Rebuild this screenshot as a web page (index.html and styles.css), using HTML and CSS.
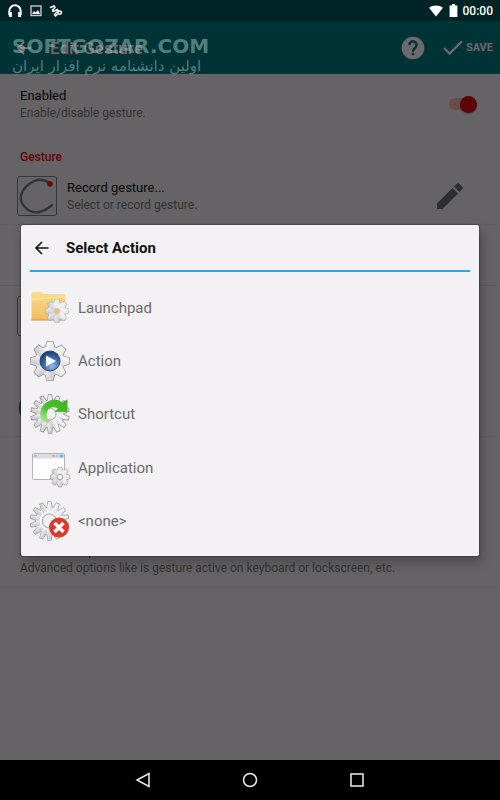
FILE: index.html
```html
<!DOCTYPE html>
<html lang="en">

<head>
    <meta charset="UTF-8">
    <meta name="viewport" content="width=device-width, initial-scale=1.0">
    <title>Edit Gesture</title>
    <link rel="stylesheet" href="styles.css">
</head>

<body>
    <!-- shared gear shapes -->
    <svg class="defs" width="0" height="0" aria-hidden="true">
        <defs>
            <linearGradient id="metal" x1="0" y1="0" x2="1" y2="1">
                <stop offset="0" stop-color="#fdfdfd" />
                <stop offset="0.5" stop-color="#e6e6e8" />
                <stop offset="1" stop-color="#c4c4c8" />
            </linearGradient>
            <linearGradient id="folder" x1="0" y1="0" x2="0" y2="1">
                <stop offset="0" stop-color="#fbdc8c" />
                <stop offset="1" stop-color="#efbd5e" />
            </linearGradient>
            <radialGradient id="blue" cx="0.6" cy="0.75" r="0.7">
                <stop offset="0" stop-color="#8fc0ea" />
                <stop offset="0.6" stop-color="#3c6ba8" />
                <stop offset="1" stop-color="#1f3f75" />
            </radialGradient>
            <linearGradient id="green" x1="0" y1="1" x2="1" y2="0">
                <stop offset="0" stop-color="#c9f2b8" />
                <stop offset="0.4" stop-color="#4cc42f" />
                <stop offset="1" stop-color="#3fae22" />
            </linearGradient>
            <g id="bar8">
                <path d="M-4.4-14 L-3-19 H3 L4.4-14 V14 L3 19 H-3 L-4.4 14Z" />
            </g>
            <g id="gear8">
                <circle r="14.5" />
                <use href="#bar8" />
                <use href="#bar8" transform="rotate(45)" />
                <use href="#bar8" transform="rotate(90)" />
                <use href="#bar8" transform="rotate(135)" />
            </g>
            <g id="bar14">
                <path d="M-2.2-14 L-1.4-19 H1.4 L2.2-14 V14 L1.4 19 H-1.4 L-2.2 14Z" />
            </g>
            <g id="gear14">
                <circle r="13.5" />
                <use href="#bar14" />
                <use href="#bar14" transform="rotate(25.7)" />
                <use href="#bar14" transform="rotate(51.4)" />
                <use href="#bar14" transform="rotate(77.1)" />
                <use href="#bar14" transform="rotate(102.9)" />
                <use href="#bar14" transform="rotate(128.6)" />
                <use href="#bar14" transform="rotate(154.3)" />
            </g>
        </defs>
    </svg>

    <div class="screen">
        <div class="status-bar">
            <svg width="16" height="16" viewBox="0 0 16 16" fill="none" stroke="#fff" stroke-width="2">
                <path d="M2.3 12V8a5.7 5.7 0 0 1 11.4 0V12" />
                <path d="M3.4 9v5M12.6 9v5" stroke-width="3" />
            </svg>
            <svg width="12" height="12" viewBox="0 0 12 12">
                <rect x="1" y="1" width="10" height="9.5" fill="none" stroke="#cfc4c8" stroke-width="1.4" />
                <path d="M2 9l2-3 1.6 1.6L8 5l2 4z" fill="#fff" />
            </svg>
            <svg width="14" height="14" viewBox="0 0 14 14" fill="none" stroke="#fff" stroke-width="1.5" stroke-linecap="round" stroke-linejoin="round">
                <path d="M1.500 3.500L5 1.800 6 3.500 3.500 6 4 7.500 8.500 5.500 9.200 6.800 5.500 10.500 6.500 12 9.500 9.500" />
                <circle cx="10.800" cy="8.600" r="1.700" />
            </svg>
            <span class="spacer"></span>
            <svg width="16" height="12" viewBox="0 0 16 12">
                <path d="M1 2.8C5-.2 11-.2 15 2.8L8 11.6z" fill="#fff" />
            </svg>
            <svg class="battery" width="9" height="13" viewBox="0 0 9 13">
                <path d="M3 0h3v1.4h2.4V13H.6V1.4H3z" fill="#fff" />
            </svg>
            <span class="clock">00:00</span>
        </div>

        <header class="app-bar">
            <button type="button" class="back" aria-label="Back">
                <svg width="16" height="16" viewBox="0 0 16 16" fill="none" stroke="#7a6a6c" stroke-width="2">
                    <path d="M15 8H2M8 2L2 8l6 6" />
                </svg>
            </button>
            <h1>Edit Gesture</h1>
            <button type="button" class="help" aria-label="Help">
                <svg width="24" height="24" viewBox="0 0 24 24">
                    <circle cx="12" cy="12" r="11.3" fill="#6d686b" />
                    <path d="M8.4 9.2a3.6 3.6 0 1 1 6 2.4c-1.4 1.200-2.400 1.800-2.400 3.800" fill="none" stroke="#003335" stroke-width="2.4" />
                    <rect x="10.8" y="16.8" width="2.4" height="2.4" fill="#003335" />
                </svg>
            </button>
            <button type="button" class="save">
                <svg width="20" height="16" viewBox="0 0 20 16" fill="none" stroke="#6d686b" stroke-width="2.2">
                    <path d="M1 8l5.6 5.6L19 1.2" />
                </svg>
                SAVE
            </button>
            <div class="watermark">
                <span class="wm-site">SOFTGOZAR.COM</span>
                <span class="wm-text" lang="fa" dir="rtl">اولین دانشنامه نرم افزار ایران</span>
            </div>
        </header>

        <main class="settings">
            <div class="row plain">
                <label class="row-text" for="enabled">
                    <span class="title">Enabled</span>
                    <span class="sub">Enable/disable gesture.</span>
                </label>
                <input type="checkbox" id="enabled" class="switch" checked>
            </div>

            <h2>Gesture</h2>
            <div class="row first">
                <svg class="thumb" width="40" height="40" viewBox="0 0 40 40" fill="none">
                    <rect x="0.5" y="0.5" width="39" height="39" rx="2" stroke="#2f3939" />
                    <path d="M33 7.500C26 2 18 3 11 9 4 15 1 23 7 30c8 10 19 7 28-1" stroke="#343636" stroke-width="2.4" stroke-linecap="round" />
                    <circle cx="33" cy="8" r="2.8" fill="#6b0808" />
                </svg>
                <div class="row-text">
                    <span class="title">Record gesture...</span>
                    <span class="sub">Select or record gesture.</span>
                </div>
                <button type="button" class="edit" aria-label="Edit gesture">
                    <svg width="28" height="28" viewBox="0 0 28 28" fill="#2d2f2f">
                        <path d="M1 21.500L16.500 6l5.500 5.500L6.500 27H1z" />
                        <path d="M18 4.500l3-3q1-1 2 0l3.500 3.500q1 1 0 2l-3 3z" />
                    </svg>
                </button>
            </div>
            <div class="row"></div>
            <div class="row plain">
                <svg class="thumb" width="40" height="40" viewBox="0 0 40 40" fill="none">
                    <rect x="0.5" y="0.5" width="39" height="39" rx="2" stroke="#2f3939" />
                </svg>
            </div>

            <h2></h2>
            <div class="row first">
                <svg class="thumb" width="40" height="40" viewBox="0 0 40 40">
                    <circle cx="20" cy="20" r="18" fill="#0d2f31" />
                </svg>
            </div>
            <div class="row plain"></div>

            <h2></h2>
            <div class="row first">
                <div class="row-text">
                    <span class="title">Advanced options</span>
                    <span class="sub">Advanced options like is gesture active on keyboard or lockscreen, etc.</span>
                </div>
            </div>
        </main>

        <nav class="nav-bar">
            <button type="button" aria-label="Back">
                <svg width="16" height="16" viewBox="0 0 16 16"><path d="M14 1.500v13L2 8z" /></svg>
            </button>
            <button type="button" aria-label="Home">
                <svg width="16" height="16" viewBox="0 0 16 16"><circle cx="8" cy="8" r="6.500" /></svg>
            </button>
            <button type="button" aria-label="Recent apps">
                <svg width="16" height="16" viewBox="0 0 16 16"><rect x="2" y="2" width="12" height="12" /></svg>
            </button>
        </nav>

        <div class="overlay">
            <section class="dialog" role="dialog" aria-labelledby="dialogTitle">
                <div class="dialog-head">
                    <button type="button" aria-label="Close">
                        <svg width="16" height="16" viewBox="0 0 16 16" fill="none" stroke="#111" stroke-width="1.600">
                            <path d="M14.500 8H2M8 2L2 8l6 6" />
                        </svg>
                    </button>
                    <h2 id="dialogTitle">Select Action</h2>
                </div>
                <div class="actions">
                    <button type="button">
                        <svg width="40" height="40" viewBox="0 0 40 40">
                            <path d="M1.500 6q0-2 2-2h7q2 0 2.500 2h21q1.500 0 1.500 1.500V32h-34z" fill="url(#folder)" />
                            <path d="M2 11.500l33-3" stroke="#fdeab5" />
                            <path d="M1.500 32h34" stroke="#c98d55" />
                            <g transform="translate(27 23) scale(0.6)">
                                <use href="#gear8" stroke="#b5b5b8" stroke-width="2" />
                                <use href="#gear8" fill="url(#metal)" />
                                <circle r="4.500" fill="#f0c069" stroke="#c2c2c5" stroke-width="1.500" />
                            </g>
                        </svg>
                        Launchpad
                    </button>
                    <button type="button">
                        <svg width="40" height="40" viewBox="0 0 40 40">
                            <g transform="translate(20 20)">
                                <use href="#gear8" stroke="#929296" stroke-width="1.500" />
                                <use href="#gear8" fill="url(#metal)" />
                                <circle r="10" fill="url(#blue)" stroke="#2b4674" />
                                <path d="M-4-5.500L6 0l-10 5.500z" fill="#fff" />
                            </g>
                        </svg>
                        Action
                    </button>
                    <button type="button">
                        <svg width="40" height="40" viewBox="0 0 40 40">
                            <g transform="translate(20 20)">
                                <use href="#gear14" stroke="#929296" stroke-width="1.500" />
                                <use href="#gear14" fill="url(#metal)" />
                                <circle r="6" fill="#f3f1f4" stroke="#a9a9ad" />
                            </g>
                            <path d="M12 27C7 19 13 6 25 5.500q4 0 7 3l5.500-3V18H24l4-3.500c-5-3-11-1-11.500 6q0 5 3.500 7.500-4 2-8-1z" fill="url(#green)" />
                        </svg>
                        Shortcut
                    </button>
                    <button type="button">
                        <svg width="40" height="40" viewBox="0 0 40 40">
                            <rect x="2.500" y="5.500" width="32" height="26" rx="1" fill="#fdfdfe" stroke="#b4b4b8" />
                            <path d="M3 6h31v4.500H3z" fill="#dcdce2" />
                            <path d="M4 8h3M22 8h3M26 8h2" stroke="#bcbcc2" stroke-width="2" />
                            <circle cx="31.500" cy="8" r="1.500" fill="#4cb3ea" />
                            <g transform="translate(30 29) scale(0.5)">
                                <use href="#gear8" stroke="#a0a0a4" stroke-width="2.500" />
                                <use href="#gear8" fill="url(#metal)" />
                                <circle r="5.500" fill="#f7f7f9" stroke="#a2a2a6" stroke-width="2" />
                            </g>
                        </svg>
                        Application
                    </button>
                    <button type="button">
                        <svg width="40" height="40" viewBox="0 0 40 40">
                            <g transform="translate(19.500 20)">
                                <use href="#gear14" stroke="#a5a5a8" stroke-width="1.500" />
                                <use href="#gear14" fill="url(#metal)" />
                                <circle r="9" fill="none" stroke="#fafafa" stroke-width="2" />
                                <circle r="7" fill="#f3f1f4" stroke="#a9a9ad" />
                            </g>
                            <circle cx="29" cy="26.500" r="10" fill="#db3a2b" />
                            <path d="M24.500 22l9 9M33.500 22l-9 9" stroke="#fff" stroke-width="3.500" />
                        </svg>
                        &lt;none&gt;
                    </button>
                </div>
            </section>
        </div>
    </div>
</body>

</html>
```
FILE: styles.css
```css
* {
    box-sizing: border-box;
}

body {
    font-family: Roboto, "Liberation Sans", sans-serif;
    margin: 0;
    background: #656365;
}

h1,
h2 {
    margin: 0;
}

button {
    display: flex;
    align-items: center;
    padding: 0;
    border: none;
    background: none;
    font-family: inherit;
    cursor: pointer;
}

svg {
    display: block;
    flex: none;
}

.defs {
    position: absolute;
}

.screen {
    position: relative;
    display: flex;
    flex-direction: column;
    min-height: 100vh;
}

/* top bars */
.status-bar {
    display: flex;
    align-items: center;
    gap: 7px;
    height: 21px;
    padding: 0 7px;
    background: #002426;
}

.spacer {
    flex: 1;
}

.battery {
    margin-left: -2px;
}

.clock {
    color: #fff;
    font-size: 12px;
    font-weight: 500;
    margin-left: -2px;
}

.app-bar {
    position: relative;
    display: flex;
    align-items: center;
    height: 53px;
    padding: 0 7px 0 16px;
    background: #003335;
}

.app-bar h1 {
    flex: 1;
    margin-left: 18px;
    color: #7a6466;
    font-size: 17px;
    font-weight: 500;
}

.save {
    gap: 3px;
    margin-left: 18px;
    color: #6d686b;
    font-size: 11px;
    font-weight: 700;
}

.watermark {
    position: absolute;
    top: 14px;
    left: 12px;
    color: rgba(160, 200, 198, 0.5);
    white-space: nowrap;
}

.watermark span {
    display: block;
}

.wm-site {
    font: bold 20px/22px "DejaVu Sans", sans-serif;
}

.wm-text {
    font: 15px/18px "DejaVu Sans", sans-serif;
    text-align: left;
}

/* settings behind the dialog */
.settings {
    flex: 1;
}

.settings h2 {
    height: 33px;
    padding: 14px 20px 0;
    color: #650406;
    font-size: 12px;
    line-height: 16px;
    font-weight: 500;
}

.row {
    display: flex;
    align-items: center;
    height: 61px;
    padding: 0 20px;
    border-bottom: 1px solid #5e5c5e;
}

.row.plain {
    border-bottom-color: transparent;
}

.row.first {
    height: 57px;
}

.row-text {
    flex: 1;
}

.title,
.sub {
    display: block;
}

.title {
    color: #060606;
    font-size: 13px;
    line-height: 18px;
}

.sub {
    color: #333;
    font-size: 12px;
    line-height: 16px;
}

.thumb {
    margin: 0 10px 0 -3px;
}

.edit {
    margin-right: 16px;
}

.switch {
    appearance: none;
    display: flex;
    align-items: center;
    justify-content: flex-end;
    width: 28px;
    height: 12px;
    margin: 0 3px 0 0;
    border-radius: 6px;
    background: #6b4a48;
}

.switch::before {
    content: "";
    flex: none;
    width: 17px;
    height: 17px;
    border-radius: 50%;
    background: #5c0406;
    box-shadow: 0 1px 1px rgba(0, 0, 0, 0.3);
}

/* dialog */
.overlay {
    position: absolute;
    inset: 21px 0 40px;
    display: flex;
    align-items: center;
    padding: 0 21px;
}

.dialog {
    flex: 1;
    padding: 0 9px 8px;
    border-radius: 2px;
    background: #f3f1f4;
    box-shadow: 0 0 2px rgba(0, 0, 0, 0.7), 3px 7px 12px rgba(0, 0, 0, 0.25);
}

.dialog-head {
    display: flex;
    align-items: center;
    gap: 16px;
    height: 47px;
    padding-left: 4px;
    border-bottom: 2px solid #2fa5d8;
}

.dialog-head h2 {
    color: #111;
    font-size: 15px;
    font-weight: 700;
}

.actions {
    display: grid;
    grid-auto-rows: 1fr;
    min-height: 267px;
    margin-top: 9px;
}

.actions button {
    gap: 8px;
    color: #6c6a6c;
    font-size: 15px;
    text-align: left;
}

/* navigation */
.nav-bar {
    display: flex;
    justify-content: center;
    gap: 91px;
    height: 40px;
    background: #000;
}

.nav-bar svg {
    fill: none;
    stroke: #eee;
    stroke-width: 1.5;
}
```
